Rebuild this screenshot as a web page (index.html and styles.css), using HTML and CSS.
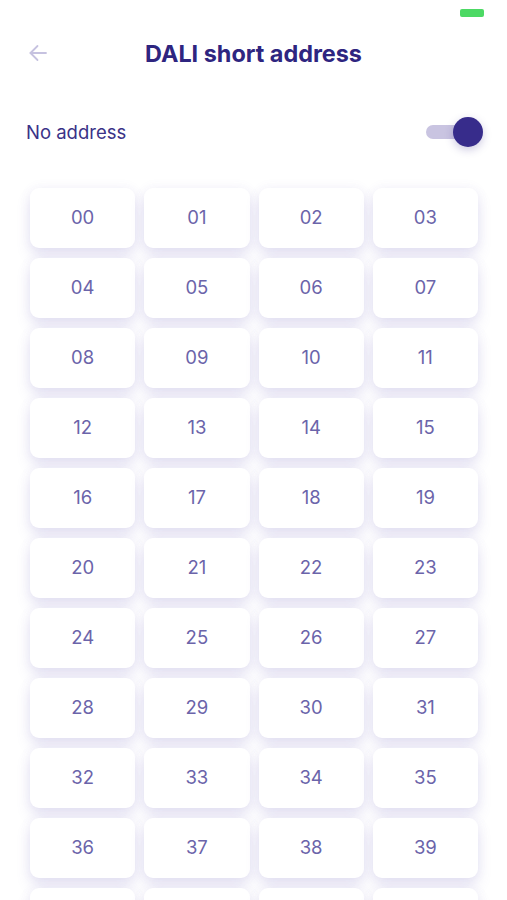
FILE: index.html
```html
<!DOCTYPE html>
<html lang="en">
<head>
	<meta charset="UTF-8">
	<meta name="viewport" content="width=device-width, initial-scale=1.0">
	<title>DALI short address</title>
	<link rel="stylesheet" href="styles.css">
</head>
<body>

	<div class="status-bar">
		<span class="battery"></span>
	</div>

	<div class="header">
		<button class="header__back" aria-label="Back">
			<svg width="20" height="20" viewBox="0 0 20 20" fill="none" stroke="#c6c2e0" stroke-width="1.8" stroke-linecap="round" stroke-linejoin="round">
				<path d="M18 10H2.5"/>
				<path d="M9.5 3L2.5 10l7 7"/>
			</svg>
		</button>
		<h1 class="header__title">DALI short address</h1>
	</div>

	<div class="option">
		<span class="option__label">No address</span>
		<span class="switch switch--on"><span class="switch__knob"></span></span>
	</div>

	<div class="address-grid"></div>

	<script>
		const grid = document.querySelector('.address-grid');
		for (let i = 0; i < 44; i++) {
			const tile = document.createElement('button');
			tile.className = 'address-tile';
			tile.textContent = String(i).padStart(2, '0');
			grid.appendChild(tile);
		}
	</script>

</body>
</html>
```

FILE: styles.css
```css
* {
    margin: 0;
    padding: 0;
    box-sizing: border-box;
}

body {
    background: #fff;
    font-family: 'Inter', 'Noto Sans', sans-serif;
    color: #2f2782;
    height: 900px;
    overflow: hidden;
}

.status-bar {
    height: 26px;
    display: flex;
    justify-content: flex-end;
    padding: 9px 23px 0 0;
}

.battery {
    width: 24px;
    height: 8px;
    border-radius: 2px;
    background: #4cd964;
}

.header {
    position: relative;
    height: 54px;
    display: flex;
    align-items: center;
    justify-content: center;
}

.header__back {
    position: absolute;
    left: 28px;
    top: 17px;
    border: none;
    background: none;
    width: 20px;
    height: 20px;
    display: flex;
}

.header__title {
    font-size: 23.4px;
    font-weight: 700;
    color: #2e2580;
}

.option {
    display: flex;
    align-items: center;
    justify-content: space-between;
    padding: 26px 24px 0 26px;
    height: 78px;
}

.option__label {
    font-size: 18.5px;
    font-weight: 400;
    color: #3a3287;
}

.switch {
    position: relative;
    width: 44px;
    height: 14px;
    border-radius: 7px;
    background: #c9c4e1;
    margin-right: 13px;
}

.switch__knob {
    position: absolute;
    right: -13px;
    top: -8px;
    width: 30px;
    height: 30px;
    border-radius: 50%;
    background: #372c8b;
    box-shadow: 0 3px 8px rgba(55, 44, 139, 0.25);
}

.address-grid {
    display: grid;
    grid-template-columns: repeat(4, 1fr);
    grid-auto-rows: 60px;
    column-gap: 9px;
    row-gap: 10px;
    padding: 30px 29px 0 30px;
}

.address-tile {
    border: none;
    border-radius: 9px;
    background: #fff;
    font-family: 'Inter', 'Noto Sans', sans-serif;
    font-size: 18.5px;
    color: #6b64aa;
    padding-bottom: 3px;
    box-shadow: 0 8px 14px rgba(110, 100, 190, 0.17), 0 0 12px rgba(110, 100, 190, 0.07);
}
```
